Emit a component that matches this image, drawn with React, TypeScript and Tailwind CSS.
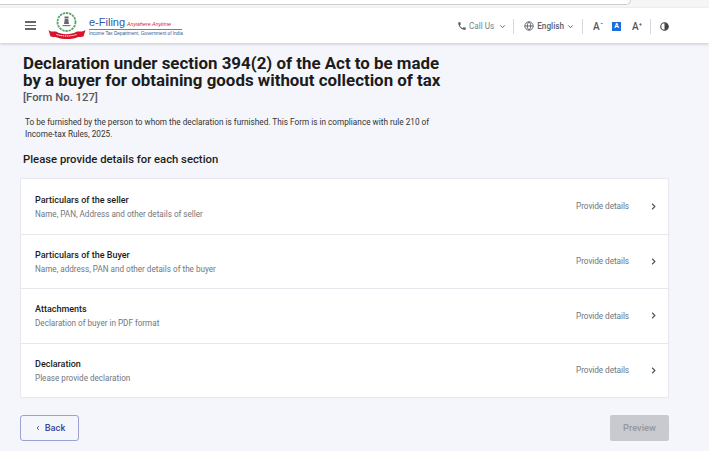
const sections = [
  { title: 'Particulars of the seller', description: 'Name, PAN, Address and other details of seller' },
  { title: 'Particulars of the Buyer', description: 'Name, address, PAN and other details of the buyer' },
  { title: 'Attachments', description: 'Declaration of buyer in PDF format' },
  { title: 'Declaration', description: 'Please provide declaration' },
];

const Chevron = ({ className, dir = 'down' }: { className: string; dir?: 'down' | 'left' | 'right' }) => {
  const d = dir === 'down' ? 'M6 9l6 6 6-6' : dir === 'left' ? 'M15 6l-6 6 6 6' : 'M9 6l6 6-6 6';
  return (
    <svg viewBox="0 0 24 24" fill="none" stroke="currentColor" strokeWidth="2.6" className={className}>
      <path d={d} />
    </svg>
  );
};

const Emblem = () => (
  <svg viewBox="0 0 38 28" className="w-[38px] h-[28px]">
    <circle cx="18.500" cy="10" r="9" fill="#fff" stroke="#5aa469" strokeWidth="1.800" strokeDasharray="2.400 .8" />
    <path d="M16.500 4.500h4v2h-4zM16.800 7h3.400l.8 5h-5z" fill="#66696e" />
    <path d="M14.500 13h8v1.200h-8z" fill="#77797d" />
    <path d="M.5 18c3 2.500 5 1 7.500 1.500 6 3.500 15 3.500 21 0 2.500-.5 4.500 1 8.500-1.500l-2 6.500c-3 1-4.500-.2-6.500 1-6 2-14 2-20 0-2-1.200-3.500 0-6.500-1z" fill="#d8132a" />
    <path d="M8.500 22.500c6 2 14 2 20 0" stroke="#fff" strokeWidth="1" strokeDasharray="1.500 .6" fill="none" />
  </svg>
);

const Phone = () => (
  <svg viewBox="0 0 24 24" className="w-[10px] h-[10px] fill-[#555b63]">
    <path d="M6.600 10.800a15 15 0 0 0 6.600 6.600l2.200-2.200c.3-.3.7-.4 1-.2 1.100.4 2.300.6 3.600.6.600 0 1 .4 1 1V20c0 .6-.4 1-1 1C10.600 21 3 13.400 3 4c0-.6.4-1 1-1h3.500c.6 0 1 .4 1 1 0 1.300.2 2.500.6 3.600.1.300 0 .7-.2 1z" />
  </svg>
);

const Globe = () => (
  <svg viewBox="0 0 24 24" fill="none" stroke="#555b63" strokeWidth="2.200" className="w-[10px] h-[10px]">
    <circle cx="12" cy="12" r="10" />
    <path d="M2 12h20M12 2c3 3 4 6 4 10s-1 7-4 10c-3-3-4-6-4-10s1-7 4-10z" />
  </svg>
);

const Contrast = () => (
  <svg viewBox="0 0 24 24" className="w-[9px] h-[9px]">
    <circle cx="12" cy="12" r="10" fill="none" stroke="#444" strokeWidth="3" />
    <path d="M12 2a10 10 0 0 1 0 20z" fill="#444" />
  </svg>
);

const Divider = () => <div className="w-px h-[15px] bg-[#d5d8dd]" />;

export default function App() {
  return (
    <div className="w-[709px] h-[451px] overflow-hidden bg-[#f5f6fb] font-['Roboto',sans-serif]">
      <div className="h-[8px] bg-[#f6f6f6]">
        <div className="w-[631px] h-[5px] bg-white border-b border-r border-[#cfcfcf] rounded-br-[6px]" />
      </div>
      <header className="h-[35px] bg-white shadow-[0_1px_3px_rgba(0,0,0,0.2)] flex items-center pl-[25px] pr-[40px]">
        <div className="flex flex-col gap-[2px] w-[11px]">
          <span className="h-[1.500px] bg-[#666]" />
          <span className="h-[1.500px] bg-[#666]" />
          <span className="h-[1.500px] bg-[#666]" />
        </div>
        <div className="ml-[12px]">
          <Emblem />
        </div>
        <div className="ml-[3px] w-[93px]">
          <div className="flex items-baseline h-[14px] leading-[14px] whitespace-nowrap">
            <span className="text-[11px] text-[#2a5ba8] font-['Liberation_Sans']">e-Filing</span>
            <span className="ml-[2px] text-[5.300px] text-[#d5203a] italic font-['Liberation_Sans']">Anywhere Anytime</span>
          </div>
          <div className="h-px bg-[#4f9d5c]" />
          <div className="text-[4.650px] leading-[7px] text-[#2d5a92] whitespace-nowrap font-['Liberation_Sans']">
            Income Tax Department, Government of India
          </div>
        </div>
        <div className="ml-auto mt-[2px] flex items-center text-[#5b6168]">
          <div className="flex items-center gap-[2px]">
            <Phone />
            <span className="text-[8.200px] text-[#7a7f86]">Call Us</span>
            <Chevron dir="down" className="w-[9px] h-[9px] ml-[2px]" />
          </div>
          <div className="ml-[6px]">
            <Divider />
          </div>
          <div className="ml-[10px] flex items-center gap-[3px]">
            <Globe />
            <span className="text-[8.200px] font-medium">English</span>
            <Chevron dir="down" className="w-[9px] h-[9px] -ml-[1px]" />
          </div>
          <div className="ml-[7px]">
            <Divider />
          </div>
          <span className="ml-[10px] w-[9px] text-[10px] leading-[10px] font-medium text-[#555] relative">
            A<span className="absolute -top-[1px] -right-[1px] text-[7px] leading-[7px]">-</span>
          </span>
          <span className="ml-[10px] w-[9px] h-[9px] bg-[#1a6fd8] text-white text-[7px] font-bold flex items-center justify-center">A</span>
          <span className="ml-[11px] w-[9px] text-[10px] leading-[10px] font-medium text-[#555] relative">
            A<span className="absolute -top-[1px] -right-[1px] text-[6px] leading-[6px]">+</span>
          </span>
          <div className="ml-[9px]">
            <Divider />
          </div>
          <div className="ml-[9px]">
            <Contrast />
          </div>
        </div>
      </header>

      <main className="pl-[20px] w-[669px]">
        <div className="pl-[3px]">
          <h1 className="mt-[12px] text-[16.900px] leading-[17px] font-bold text-[#1c1c1c]">
            Declaration under section 394(2) of the Act to be made
            <br />
            by a buyer for obtaining goods without collection of tax
          </h1>
          <div className="mt-[2px] text-[11.300px] leading-[14px] font-medium text-[#55585c]">[Form No. 127]</div>
          <p className="mt-[11px] pl-[2px] text-[8.220px] leading-[12px] text-[#333]">
            To be furnished by the person to whom the declaration is furnished. This Form is in compliance with rule 210 of
            <br />
            Income-tax Rules, 2025.
          </p>
          <h2 className="mt-[13px] text-[11.300px] leading-[14px] font-medium text-[#1c1c1c]">Please provide details for each section</h2>
        </div>

        <div className="mt-[11px] bg-white border border-[#e6e8ee] rounded-[2px]">
          {sections.map((section, index) => (
            <div
              key={section.title}
              className={`h-[54.500px] flex items-center pl-[14px] pr-[9px] ${index > 0 ? 'border-t border-[#e6e8ee]' : ''}`}
            >
              <div className="pt-[1px]">
                <div className="text-[9px] leading-[12px] font-medium text-[#1c1c1c]">{section.title}</div>
                <div className="mt-[2px] text-[8.150px] leading-[12px] text-[#71767c]">{section.description}</div>
              </div>
              <span className="ml-auto text-[8.300px] tracking-[-0.1px] text-[#71767c]">Provide details</span>
              <Chevron dir="right" className="ml-[19px] w-[11px] h-[11px] text-[#555]" />
            </div>
          ))}
        </div>

        <div className="mt-[17px] flex justify-between">
          <button className="w-[59px] h-[26px] rounded-[3px] border-[1.500px] border-[#9aa3d2] text-[#3a4a9f] text-[9.300px] font-medium flex items-center justify-center gap-[3px]">
            <Chevron dir="left" className="w-[8px] h-[8px]" />
            Back
          </button>
          <button className="w-[59px] h-[26px] rounded-[2px] bg-[#c9cacf] text-[#95979d] text-[9.300px] font-medium">Preview</button>
        </div>
      </main>
    </div>
  );
}
